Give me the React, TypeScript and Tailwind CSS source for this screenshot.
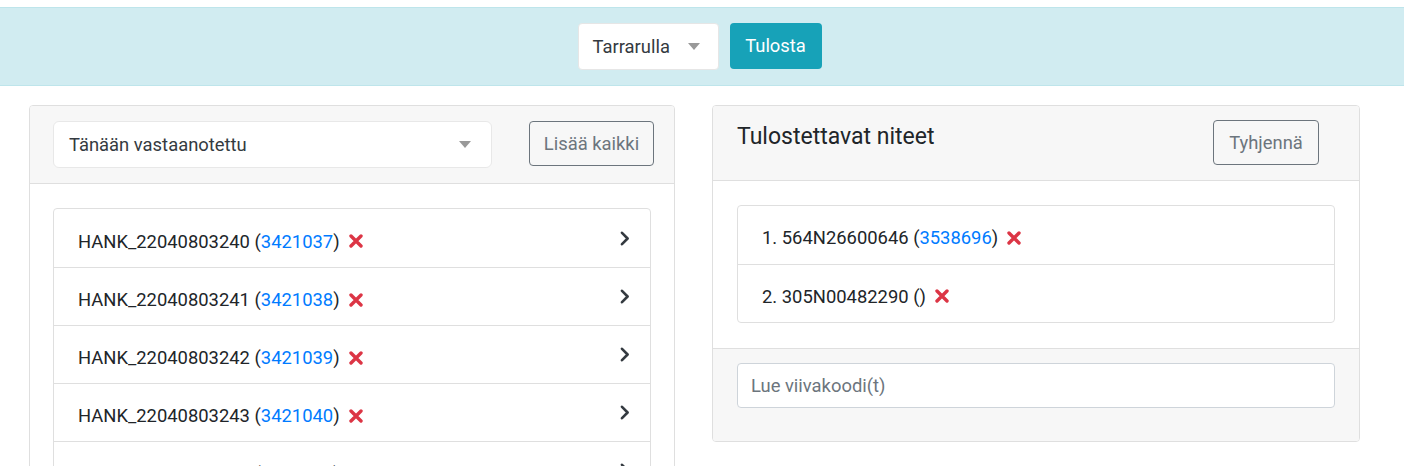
type Item = { code: string; id: string };

const INCOMING: Item[] = [
  { code: "HANK_22040803240", id: "3421037" },
  { code: "HANK_22040803241", id: "3421038" },
  { code: "HANK_22040803242", id: "3421039" },
  { code: "HANK_22040803243", id: "3421040" },
  { code: "HANK_22040803244", id: "3421041" },
];

const QUEUE: Item[] = [
  { code: "564N26600646", id: "3538696" },
  { code: "305N00482290", id: "" },
];

function Caret() {
  return (
    <svg width="12" height="7" viewBox="0 0 12 7" className="shrink-0">
      <path d="M0 0 L12 0 L6 7 Z" fill="#999" />
    </svg>
  );
}

function Remove() {
  return (
    <svg width="14" height="14" viewBox="0 0 14 14" className="ml-[9px] shrink-0">
      <path d="M2 2 L12 12 M12 2 L2 12" stroke="#dc3545" strokeWidth="3.4" strokeLinecap="round" />
    </svg>
  );
}

function Chevron() {
  return (
    <svg width="10" height="15" viewBox="0 0 10 15" className="shrink-0">
      <path d="M2 1.8 L7.6 7.5 L2 13.2" stroke="#343a40" strokeWidth="2.6" fill="none" strokeLinecap="round" strokeLinejoin="round" />
    </svg>
  );
}

function Label({ item, n }: { item: Item; n?: number }) {
  return (
    <div className="flex items-center">
      <span>
        {n !== undefined && `${n}. `}
        {item.code} (
        {item.id && <a className="text-[#007bff]">{item.id}</a>})
      </span>
      <Remove />
    </div>
  );
}

export default function App() {
  return (
    <div className="min-h-[466px] bg-white pt-[7px] text-[18.4px] text-[#212529]" style={{ fontFamily: 'Roboto, "Noto Sans", sans-serif' }}>
      <div className="flex h-[79px] items-center justify-center gap-[11px] border-y border-[#bee5eb] bg-[#d1ecf1] pr-[5px]">
        <div className="flex h-[47px] w-[141px] items-center justify-between rounded-[4px] border border-[#e6e6e6] bg-white pl-[14px] pr-[18px] text-[#343a40]">
          <span>Tarrarulla</span>
          <Caret />
        </div>
        <button className="mb-[1px] h-[46px] w-[92px] rounded-[4px] bg-[#17a2b8] text-white">Tulosta</button>
      </div>

      <div className="flex gap-[37px] pl-[29px] pt-[19px]">
        <div className="h-[400px] w-[646px] overflow-hidden rounded-t-[4px] border border-[#dfdfdf]">
          <div className="flex h-[78px] items-center justify-between border-b border-[#dfdfdf] bg-[#f7f7f7] pl-[23px] pr-[20px]">
            <div className="flex h-[47px] w-[439px] items-center justify-between rounded-[6px] border border-[#e8e8e8] bg-white pl-[15px] pr-[20px] text-[#343a40]">
              <span>Tänään vastaanotettu</span>
              <Caret />
            </div>
            <button className="mt-[-2px] h-[45px] w-[125px] rounded-[4px] border border-[#6c757d] text-[#6c757d]">Lisää kaikki</button>
          </div>
          <div className="px-[23px] pt-[24px]">
            <div className="w-[598px] rounded-[4px] border border-[#dfdfdf] bg-white">
              {INCOMING.map((it, i) => (
                <div key={it.code} className={`flex h-[58px] items-center justify-between pl-[24px] pr-[20px] ${i > 0 ? "border-t border-[#dfdfdf]" : ""}`}>
                  <div className="pt-[7px]">
                    <Label item={it} />
                  </div>
                  <Chevron />
                </div>
              ))}
            </div>
          </div>
        </div>

        <div className="h-[337px] w-[648px] overflow-hidden rounded-[4px] border border-[#dfdfdf]">
          <div className="flex h-[75px] items-start justify-between border-b border-[#dfdfdf] bg-[#f7f7f7] pl-[24px] pr-[40px] pt-[14px]">
            <h2 className="mt-[3px] text-[23px] leading-[28px]">Tulostettavat niteet</h2>
            <button className="h-[45px] w-[106px] rounded-[4px] border border-[#6c757d] text-[#6c757d]">Tyhjennä</button>
          </div>
          <div className="h-[167px] bg-white px-[24px] pt-[24px]">
            <div className="w-[598px] rounded-[4px] border border-[#dfdfdf]">
              {QUEUE.map((it, i) => (
                <div key={it.code} className={`flex h-[58px] items-center pl-[24px] pt-[6px] ${i > 0 ? "border-t border-[#dfdfdf]" : ""}`}>
                  <Label item={it} n={i + 1} />
                </div>
              ))}
            </div>
          </div>
          <div className="h-[94px] border-t border-[#dfdfdf] bg-[#f7f7f7] px-[24px] pt-[14px]">
            <input
              className="h-[45px] w-[598px] rounded-[4px] border border-[#ced4da] bg-white px-[13px] text-[18.4px] outline-none placeholder:text-[#6c757d]"
              placeholder="Lue viivakoodi(t)"
            />
          </div>
        </div>
      </div>
    </div>
  );
}
